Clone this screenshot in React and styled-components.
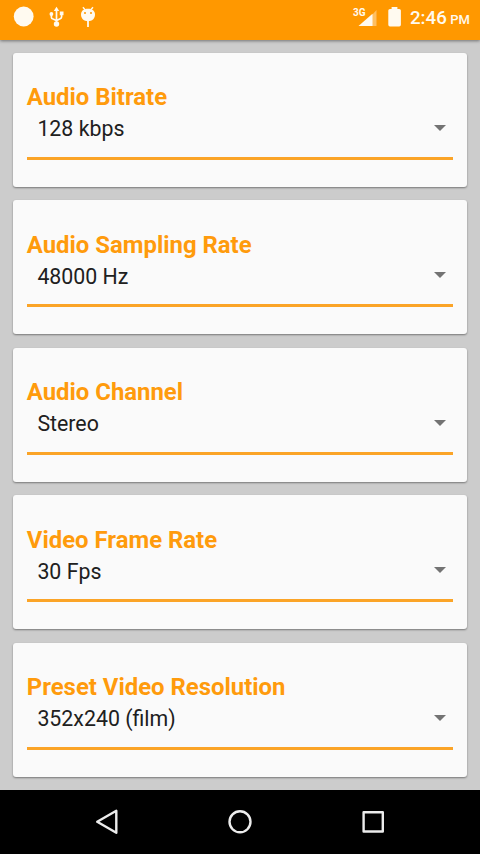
import React, { useState } from 'react';
import styled, { createGlobalStyle } from 'styled-components';

const GlobalStyle = createGlobalStyle`
  * {
    box-sizing: border-box;
  }

  body {
    margin: 0;
    background: #cccccc;
    font-family: Roboto, 'Liberation Sans', sans-serif;
  }
`;

const Screen = styled.div`
  display: flex;
  flex-direction: column;
  height: 854px;
  overflow: hidden;
  background: #cccccc;
`;

const StatusBar = styled.header`
  display: flex;
  flex: none;
  align-items: flex-start;
  justify-content: space-between;
  height: 40px;
  background: #ff9800;
  box-shadow: 0 1px 3px rgba(0, 0, 0, 0.45);
`;

const StatusIcons = styled.svg`
  display: block;
  flex: none;
`;

const StatusRight = styled.div`
  display: flex;
  padding-right: 10px;
`;

const Clock = styled.div`
  width: 60px;
  color: #fffaf0;
  font-size: 18.7px;
  font-weight: 500;
  line-height: 36px;
  white-space: nowrap;
`;

const Meridiem = styled.span`
  margin-left: 3.5px;
  font-size: 13px;
`;

const Settings = styled.main`
  display: flex;
  flex: 1;
  flex-direction: column;
  gap: 13.5px;
  padding: 12.7px 13.2px 0;
`;

const Card = styled.section`
  flex: none;
  height: 134px;
  padding: 30.4px 13.6px 0;
  border-radius: 3px;
  background: #fafafa;
  box-shadow: 0 1px 2px rgba(0, 0, 0, 0.42);
`;

const Title = styled.h2`
  margin: 0;
  color: #ff9b0c;
  font-size: 23.9px;
  font-weight: 700;
  line-height: 28px;
`;

const Spinner = styled.button`
  display: flex;
  align-items: center;
  justify-content: space-between;
  width: 100%;
  height: 35px;
  padding: 0 7.2px 0 10.6px;
  border: none;
  background: none;
  color: #202020;
  font-family: inherit;
  font-size: 21.33px;
  line-height: 25px;
  cursor: pointer;
`;

const Arrow = styled.span`
  width: 0;
  height: 0;
  margin-bottom: 2px;
  border-top: 6.7px solid #737373;
  border-right: 6.7px solid transparent;
  border-left: 6.7px solid transparent;
`;

const Underline = styled.div`
  height: 3px;
  margin-top: 10.9px;
  background: #fba427;
`;

const NavBar = styled.nav`
  display: flex;
  flex: none;
  justify-content: center;
  gap: 85.4px;
  height: 64px;
  background: #000;
`;

const NavButton = styled.button`
  width: 48px;
  height: 64px;
  padding: 0;
  border: none;
  background: none;

  svg {
    display: block;
    fill: none;
    stroke: #ececec;
    stroke-width: 2.4;
    stroke-linejoin: round;
  }
`;

const settings = [
  { title: 'Audio Bitrate', value: '128 kbps' },
  { title: 'Audio Sampling Rate', value: '48000 Hz' },
  { title: 'Audio Channel', value: 'Stereo' },
  { title: 'Video Frame Rate', value: '30 Fps' },
  { title: 'Preset Video Resolution', value: '352x240 (film)' },
];

const NotificationIcons = () => (
  <StatusIcons width="110" height="36" viewBox="0 0 110 36" fill="#fffaf0">
    <circle cx="23.7" cy="16.5" r="9.9" />
    {/* usb */}
    <g fill="none" stroke="#fffaf0" strokeWidth="1.7">
      <path d="M56.5 10V24M51.4 14.5V17.2Q51.4 18.7 53 19L56.5 20.6L60.2 18.8Q61.6 18.3 61.6 16.8V13" />
    </g>
    <path d="M56.5 6.7L59.2 11H53.8Z" />
    <circle cx="51.4" cy="14" r="1.9" />
    <rect x="59.8" y="11.5" width="3.7" height="3.7" />
    <circle cx="56.5" cy="24" r="2.7" />
    {/* adb */}
    <path d="M82.9 7.2L85.3 10M93 7.2L90.6 10" fill="none" stroke="#fffaf0" strokeWidth="1.4" />
    <path d="M81 14.5C81 11.2 83.5 8.8 88 8.8S95 11.2 95 14.5C95 18.6 92 21.2 88 21.2S81 18.6 81 14.5Z" />
    <circle cx="85" cy="13.1" r="1" fill="#ff9800" />
    <circle cx="91" cy="13.1" r="1" fill="#ff9800" />
    <path d="M88 20V27" stroke="#fffaf0" strokeWidth="1.8" />
  </StatusIcons>
);

const SystemIcons = () => (
  <StatusIcons width="60" height="36" viewBox="0 0 60 36" fill="#fffaf0">
    <text x="3" y="15.6" fontFamily="Roboto, sans-serif" fontSize="10" fontWeight="700">3G</text>
    <path d="M26.5 10V26H22V15Z" opacity="0.4" />
    <path d="M22.5 13.7V26H8.5Z" />
    {/* battery */}
    <path d="M41.6 7.1H47.4V8.9H49.2Q50.9 8.9 50.9 10.6V24.7Q50.9 26.4 49.2 26.4H40Q38.3 26.4 38.3 24.7V10.6Q38.3 8.9 40 8.9H41.6Z" />
  </StatusIcons>
);

const SettingCard = ({ title, value }) => (
  <Card>
    <Title>{title}</Title>
    <Spinner type="button">
      <span>{value}</span>
      <Arrow />
    </Spinner>
    <Underline />
  </Card>
);

const App = () => {
  const [items] = useState(settings);

  return (
    <>
      <GlobalStyle />
      <Screen>
        <StatusBar>
          <NotificationIcons />
          <StatusRight>
            <SystemIcons />
            <Clock>
              2:46<Meridiem>PM</Meridiem>
            </Clock>
          </StatusRight>
        </StatusBar>
        <Settings>
          {items.map((item) => (
            <SettingCard key={item.title} title={item.title} value={item.value} />
          ))}
        </Settings>
        <NavBar>
          <NavButton aria-label="Back">
            <svg width="48" height="64" viewBox="0 0 48 64">
              <path d="M33.3 20.8V42.8L14.2 31.8Z" />
            </svg>
          </NavButton>
          <NavButton aria-label="Home">
            <svg width="48" height="64" viewBox="0 0 48 64">
              <circle cx="24" cy="31.8" r="10.5" />
            </svg>
          </NavButton>
          <NavButton aria-label="Recent apps">
            <svg width="48" height="64" viewBox="0 0 48 64">
              <rect x="14.6" y="22.3" width="19.2" height="19.2" />
            </svg>
          </NavButton>
        </NavBar>
      </Screen>
    </>
  );
};

export default App;
